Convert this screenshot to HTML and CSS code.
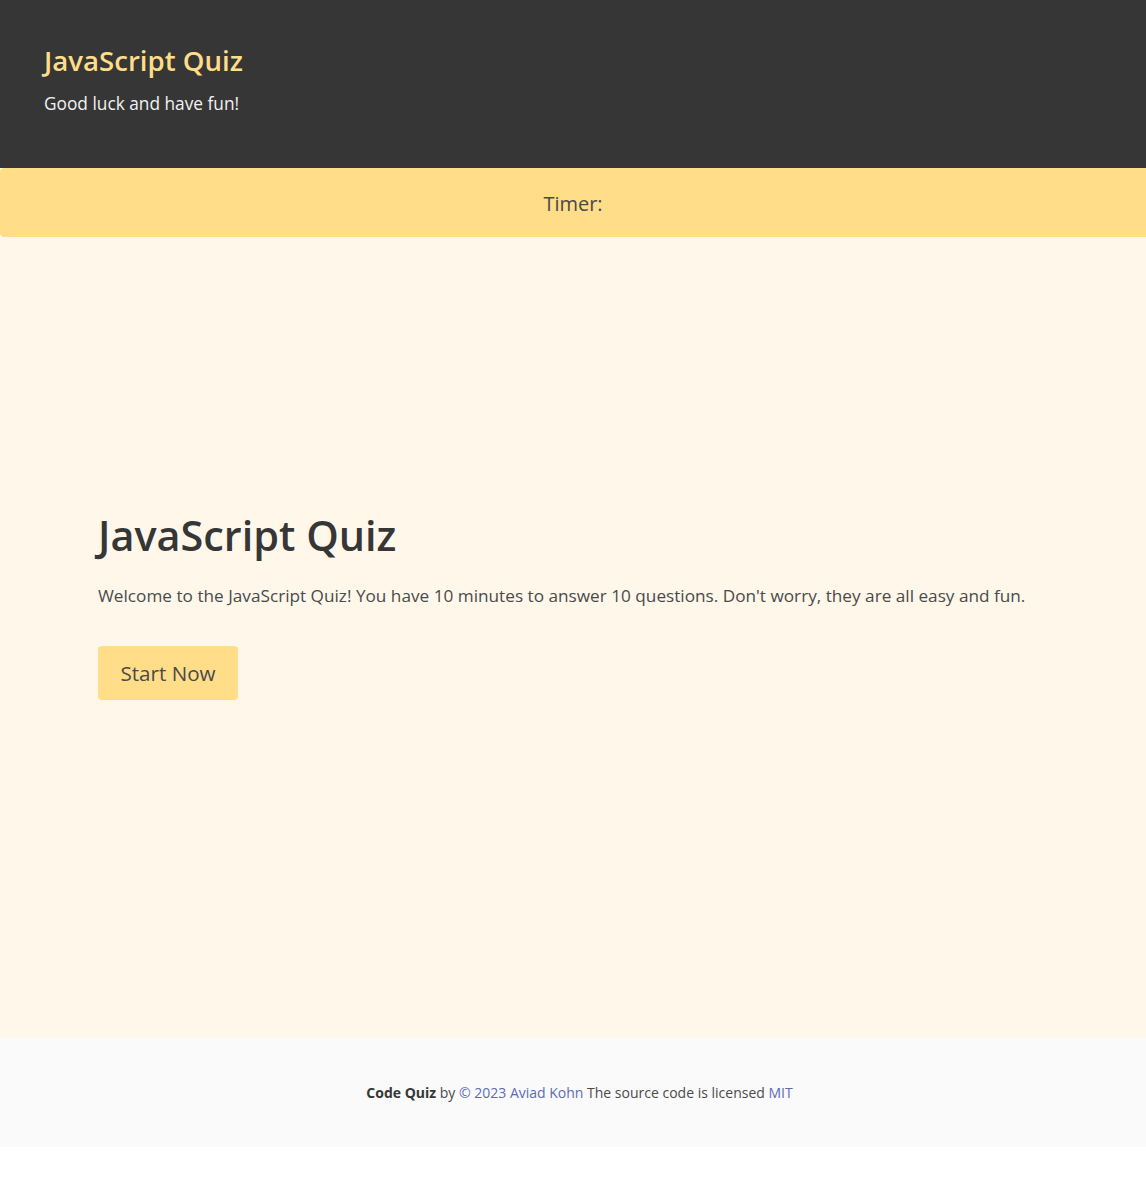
FILE: index.html
```html
<!DOCTYPE html>
<html lang="en">
<head>
<meta charset="utf-8">
<title>JavaScript Quiz</title>
<link rel="stylesheet" href="styles.css">
</head>
<body>
<header class="site-header">
  <h1 class="site-title">JavaScript Quiz</h1>
  <p class="site-subtitle">Good luck and have fun!</p>
</header>
<div class="timer-bar">Timer:</div>
<main class="main">
  <section class="intro">
    <h2 class="intro-title">JavaScript Quiz</h2>
    <p class="intro-text">Welcome to the JavaScript Quiz! You have 10 minutes to answer 10 questions. Don't worry, they are all easy and fun.</p>
    <button class="start-btn" type="button">Start Now</button>
  </section>
</main>
<footer class="footer">
  <p class="footer-text"><strong>Code Quiz</strong> by <a href="#">© 2023 Aviad Kohn</a> The source code is licensed <a href="#">MIT</a></p>
</footer>
</body>
</html>
```

FILE: styles.css
```css
html, body {
  margin: 0;
  padding: 0;
  background: #ffffff;
}
body {
  font-family: "Open Sans", "Noto Sans", "Liberation Sans", sans-serif;
  color: #4a4a4a;
}
.site-header {
  background: #363636;
  height: 168px;
  box-sizing: border-box;
  padding: 40px 44px 0;
}
.site-title {
  margin: 0;
  font-size: 27.6px;
  font-weight: 600;
  line-height: 40px;
  color: #ffdd87;
}
.site-subtitle {
  margin: 12px 0 0;
  font-size: 17.3px;
  line-height: 24px;
  color: #f2f2f2;
}
.timer-bar {
  background: #ffdd89;
  height: 69px;
  border-radius: 4px 0 0 4px;
  display: flex;
  align-items: center;
  justify-content: center;
  padding-top: 2px;
  box-sizing: border-box;
  font-size: 20px;
  color: #4a4a4a;
}
.main {
  background: #fff8ea;
  height: 801px;
  box-sizing: border-box;
  padding: 268px 98px 0;
}
.intro-title {
  margin: 0;
  font-size: 41.4px;
  font-weight: 600;
  line-height: 60px;
  color: #363636;
}
.intro-text {
  margin: 18px 0 0;
  font-size: 17.2px;
  line-height: 26px;
  color: #4a4a4a;
}
.start-btn {
  margin-top: 37px;
  width: 140px;
  height: 54px;
  border: none;
  border-radius: 4px;
  background: #ffdd89;
  color: #4a4a4a;
  font-family: inherit;
  font-size: 20.6px;
  padding: 0;
}
.footer {
  background: #fafafa;
  height: 109px;
  box-sizing: border-box;
  padding-left: 13px;
  display: flex;
  align-items: center;
  justify-content: center;
}
.footer-text {
  margin: 0;
  font-size: 14px;
  color: #4a4a4a;
}
.footer-text strong {
  color: #363636;
  font-weight: 700;
}
.footer-text a {
  color: #5b6cb8;
  text-decoration: none;
}
```
